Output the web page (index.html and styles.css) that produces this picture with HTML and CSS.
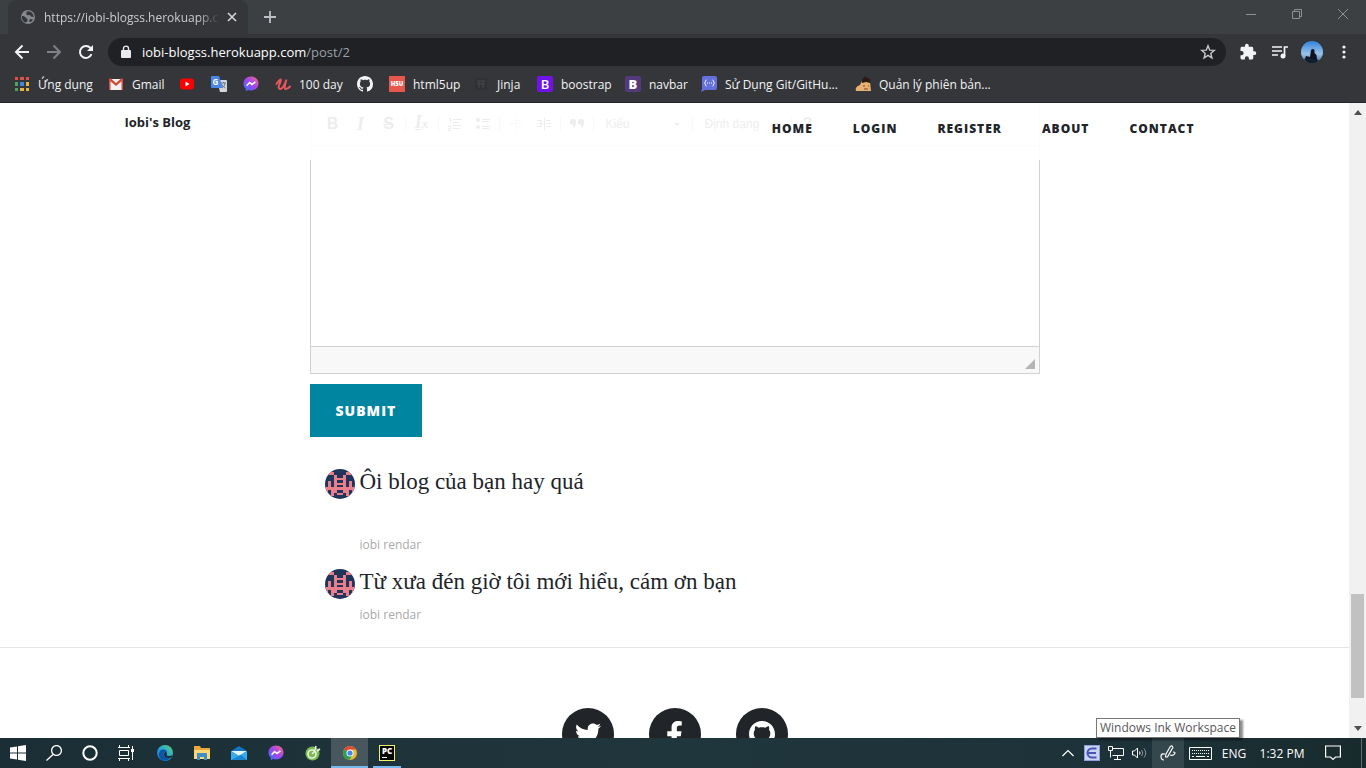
FILE: index.html
```html
<!DOCTYPE html>
<html lang="vi">
<head>
<meta charset="utf-8">
<meta name="viewport" content="width=device-width, initial-scale=1">
<title>Iobi's Blog</title>
<link rel="stylesheet" href="styles.css">
</head>
<body>
<svg class="sprite" aria-hidden="true">
  <defs>
    <linearGradient id="msg-fill" x1="0" y1="1" x2="1" y2="0">
      <stop offset="0" stop-color="#2a7bff"/><stop offset=".5" stop-color="#a044f4"/><stop offset="1" stop-color="#ff6a7a"/>
    </linearGradient>
    <linearGradient id="edge-fill" x1="0" y1="1" x2="1" y2="0">
      <stop offset="0" stop-color="#1268c4"/><stop offset=".5" stop-color="#2aa3dc"/><stop offset="1" stop-color="#5fd66a"/>
    </linearGradient>
    <linearGradient id="sky" x1="0" y1="0" x2="0" y2="1">
      <stop offset="0" stop-color="#2f83dd"/><stop offset=".6" stop-color="#9cc4ea"/><stop offset="1" stop-color="#35628c"/>
    </linearGradient>
    <clipPath id="round30"><circle cx="15" cy="15" r="15"/></clipPath>
    <clipPath id="round22"><circle cx="11" cy="11" r="11"/></clipPath>
  </defs>
  <symbol id="github" viewBox="0 0 16 16"><path fill="currentColor" d="M8 0C3.58 0 0 3.58 0 8c0 3.54 2.29 6.53 5.47 7.59.4.07.55-.17.55-.38 0-.19-.01-.82-.01-1.49-2.01.37-2.53-.49-2.69-.94-.09-.23-.48-.94-.82-1.13-.28-.15-.68-.52-.01-.53.63-.01 1.08.58 1.23.82.72 1.21 1.87.87 2.33.66.07-.52.28-.87.51-1.07-1.78-.2-3.64-.89-3.64-3.95 0-.87.31-1.59.82-2.15-.08-.2-.36-1.02.08-2.12 0 0 .67-.21 2.2.82.64-.18 1.32-.27 2-.27s1.36.09 2 .27c1.53-1.04 2.2-.82 2.2-.82.44 1.1.16 1.92.08 2.12.51.56.82 1.27.82 2.15 0 3.07-1.87 3.75-3.65 3.95.29.25.54.73.54 1.48 0 1.07-.01 1.93-.01 2.2 0 .21.15.46.55.38A8.01 8.01 0 0016 8c0-4.42-3.58-8-8-8z"/></symbol>
  <symbol id="messenger" viewBox="0 0 16 16"><path fill="url(#msg-fill)" d="M8 .5C3.700.5.5 3.600.5 7.600c0 2.100.9 3.900 2.300 5.200v2.500l2.300-1.200c.9.3 1.900.4 2.900.4 4.300 0 7.500-3.100 7.500-7C15.500 3.600 12.300.5 8 .5z"/><path d="M3.600 9.700 6.600 6.500l2.400 2 3.400-2.600" fill="none" stroke="#fff" stroke-width="1.600"/></symbol>
  <symbol id="robot" viewBox="0 0 30 30"><g clip-path="url(#round30)"><rect width="30" height="30" fill="#21355b"/><path fill="#e97f8b" d="M3 3h6v3H3zM21 3h6v3h-6zM9 6h3v3h6V6h3v12h3v-6h3v6h3v9h-3v-6h-3v6h-3v-3h-3v-3h-6v3H9v3H6v-6H3v6H0v-9h3v-6h3v6h3zM12 11v3h6v-3zM12 16v2h6v-2zM12 24h6v2h-6z"/></g></symbol>
</svg>

<header class="browser">
  <div class="tabs">
    <div class="tab">
      <svg width="16" height="16" viewBox="0 0 16 16"><circle cx="8" cy="8" r="7" fill="#85898d"/><path fill="#35363a" d="M2 7c2 0 3 .5 4 2 1 1 2 1 1.500 3L6 13.500C3 13 1.500 10 2 7zM7 2.500c2-.5 4 .2 5.500 2L14 8l-3-.5-1-1.500-2.500.3C6 6 6 4 7 2.500zM10 10l3 .5-2 2.500-2-.5z"/></svg>
      <span class="tab-title">https://iobi-blogss.herokuapp.com/post/2</span>
      <button class="plain" aria-label="Close tab"><svg width="10" height="10" viewBox="0 0 10 10"><path d="M1 1l8 8M9 1 1 9" stroke="#d5d7da" stroke-width="1.600"/></svg></button>
    </div>
    <button class="plain new-tab" aria-label="New tab"><svg width="12" height="12" viewBox="0 0 12 12"><path d="M6 0v12M0 6h12" stroke="#bdc1c6" stroke-width="1.800"/></svg></button>
    <div class="window-buttons">
      <button class="plain" aria-label="Minimize"><svg width="10" height="10"><path d="M0 5.500h10" stroke="#8d9194"/></svg></button>
      <button class="plain" aria-label="Restore"><svg width="10" height="10" fill="none" stroke="#8d9194"><path d="M.5 2.500h7v7h-7zM2.500 2.500v-2h7v7h-2"/></svg></button>
      <button class="plain" aria-label="Close"><svg width="10" height="10"><path d="M0 0l10 10M10 0 0 10" stroke="#8d9194"/></svg></button>
    </div>
  </div>

  <div class="toolbar">
    <button class="plain" aria-label="Back"><svg width="16" height="16" fill="none" stroke="#f1f3f4" stroke-width="2"><path d="M15 8H2M8.500 1.500 2 8l6.500 6.500"/></svg></button>
    <button class="plain" aria-label="Forward"><svg width="16" height="16" fill="none" stroke="#7e8185" stroke-width="2"><path d="M1 8h13M7.500 1.500 14 8l-6.500 6.500"/></svg></button>
    <button class="plain" aria-label="Reload"><svg width="16" height="16" viewBox="0 0 16 16"><path d="M13.500 10.200A6 6 0 1 1 12.500 4" fill="none" stroke="#f1f3f4" stroke-width="2"/><path d="M15 1v6H9z" fill="#f1f3f4"/></svg></button>
    <div class="address">
      <svg width="10" height="14" viewBox="0 0 10 14"><rect y="5" width="10" height="8" rx="1" fill="#e8eaed"/><path d="M2.500 5.500V3.600a2.500 2.500 0 0 1 5 0v1.900" fill="none" stroke="#e8eaed" stroke-width="1.400"/></svg>
      <span class="url">iobi-blogss.herokuapp.com<span class="url-path">/post/2</span></span>
      <button class="plain" aria-label="Bookmark this page"><svg width="16" height="16" viewBox="0 0 16 16"><path d="M8 1.800l1.700 4.300 4.600.3-3.500 3 1.100 4.500L8 11.400l-3.900 2.500 1.100-4.500-3.500-3 4.600-.3z" fill="none" stroke="#c4c7ca" stroke-width="1.400"/></svg></button>
    </div>
    <button class="plain" aria-label="Extensions"><svg width="18" height="18" viewBox="0 0 24 24" fill="#f1f3f4"><path d="M20.500 11H19V7c0-1.100-.9-2-2-2h-4V3.500a2.500 2.500 0 0 0-5 0V5H4c-1.100 0-2 .9-2 2v3.800h1.500a2.700 2.700 0 0 1 0 5.400H2V20c0 1.100.9 2 2 2h3.800v-1.500a2.700 2.700 0 0 1 5.400 0V22H17c1.100 0 2-.9 2-2v-4h1.500a2.500 2.500 0 0 0 0-5z"/></svg></button>
    <button class="plain" aria-label="Media"><svg width="16" height="14" viewBox="0 0 16 14"><path d="M0 2h10M0 6h10M0 10h6M12.500 11V2H16" fill="none" stroke="#f1f3f4" stroke-width="1.700"/><circle cx="11" cy="11" r="2.500" fill="#f1f3f4"/></svg></button>
    <button class="plain" aria-label="Profile"><svg width="22" height="22" viewBox="0 0 22 22"><g clip-path="url(#round22)"><rect width="22" height="22" fill="url(#sky)"/><path fill="#0d1420" d="M10 9q2-2 3.500 0v3l2 2 1 9H8l-1-4-3-1 1-3 4 1z"/><path fill="#11202e" d="M3 18l6-1 9 2-3 3H6z"/></g></svg></button>
    <button class="plain" aria-label="Menu"><svg width="4" height="14" fill="#f1f3f4"><circle cx="2" cy="2" r="1.600"/><circle cx="2" cy="7" r="1.600"/><circle cx="2" cy="12" r="1.600"/></svg></button>
  </div>

  <nav class="bookmarks" aria-label="Bookmarks">
    <a href="#"><svg width="16" height="16" viewBox="0 0 16 16"><path fill="#e05148" d="M1 1h3v3H1zM6 1h4v3H6zM12 1h3v3h-3z"/><path fill="#4aa565" d="M1 6h3v4H1zM1 12h3v3H1z"/><path fill="#4285e0" d="M6 6h4v4H6z"/><path fill="#e8b53c" d="M12 6h3v4h-3zM6 12h4v3H6zM12 12h3v3h-3z"/></svg><span>Ứng dụng</span></a>
    <a href="#"><svg width="16" height="16" viewBox="0 0 16 16"><path fill="#f2f2f2" d="M1 3h14v11H1z"/><path fill="#d9483b" d="M1 2.500h2L8 7l5-4.500h2V14h-1.500V5.200L8 10 2.500 5.200V14H1z"/></svg><span>Gmail</span></a>
    <a href="#" aria-label="YouTube"><svg width="16" height="16" viewBox="0 0 16 16"><rect x="1" y="2.500" width="14" height="11" rx="3" fill="#f00"/><path d="M6.500 5.500v5L10.500 8z" fill="#fff"/></svg></a>
    <a href="#" aria-label="Translate"><svg width="16" height="16" viewBox="0 0 16 16"><path fill="#d3d7dc" d="M6 4h9a1 1 0 0 1 1 1v10a1 1 0 0 1-1 1H9z"/><path fill="#4b87e8" d="M1 0h7l4 12H1a1 1 0 0 1-1-1V1a1 1 0 0 1 1-1z"/><path d="M10 7h5M12.500 6v1M14 7c0 3-1.500 4-3 5M11 8.500c1 2 2 3 3.500 3.500" stroke="#6a7683" fill="none"/><text x="1.500" y="9" class="logo-g">G</text></svg></a>
    <a href="#" aria-label="Messenger"><svg width="16" height="16"><use href="#messenger"/></svg></a>
    <a href="#"><svg width="16" height="16" viewBox="0 0 16 16"><path d="M1.500 8C3 6 4.500 3.500 5.500 3.500S5 7 4 9.500 4.500 14 6.500 12.500 10 8 11.500 3.500C10 8 9 12.500 10.500 13S13.500 12 15 10.500" fill="none" stroke="#e8575c" stroke-width="2" stroke-linecap="round"/></svg><span>100 day</span></a>
    <a href="#" aria-label="GitHub"><svg width="16" height="16"><use href="#github"/></svg></a>
    <a href="#"><svg width="16" height="16" viewBox="0 0 16 16"><rect width="16" height="16" fill="#e8574c"/><text x="8" y="10" class="logo-hsu">H5U</text></svg><span>html5up</span></a>
    <a href="#"><svg width="16" height="16" viewBox="0 0 16 16"><rect x="2" y="2" width="12" height="12" fill="#303134"/><path d="M4 5h8M4 8h8M6 5v7M10 5v7" stroke="#46484b" fill="none"/></svg><span>Jinja</span></a>
    <a href="#"><svg width="16" height="16" viewBox="0 0 16 16"><rect width="16" height="16" rx="2" fill="#7013e8"/><text x="8" y="13" class="logo-b">B</text></svg><span>boostrap</span></a>
    <a href="#"><svg width="16" height="16" viewBox="0 0 16 16"><rect width="16" height="16" rx="2" fill="#54397c"/><text x="8" y="13" class="logo-b heavy">B</text></svg><span>navbar</span></a>
    <a href="#"><svg width="16" height="16" viewBox="0 0 16 16"><path d="M3 0h11a2 2 0 0 1 2 2v10a2 2 0 0 1-2 2H4l-4 2 1-3V2a2 2 0 0 1 2-2z" fill="#6470dc"/><path d="M5.500 4C4 4 5 6 3.500 7 5 8 4 10 5.500 10M11.500 4c1.500 0 .5 2 2 3-1.500 1-.5 3-2 3" fill="none" stroke="#fff"/><path d="M6 7h1M8 7h1M10 7h1" stroke="#fff"/></svg><span>Sử Dụng Git/GitHu...</span></a>
    <a href="#"><svg width="16" height="16" viewBox="0 0 16 16"><path fill="#e6b273" d="M7 5l8 1 1 9H1c-1-3 1-5 4-6z"/><path fill="#2c1b12" d="M7 5c0-3 2-2 3-5l2 2c3 0 4 2 3 5l-4-1-4 1z"/><path stroke="#7d4b27" d="M8 10h2M13 10h1M9 13h4"/></svg><span>Quản lý phiên bản...</span></a>
  </nav>
</header>

<div class="viewport">
  <div class="page">
    <div class="site-bar">
      <div class="site-bar-inner">
        <a class="brand" href="#">Iobi's Blog</a>
        <nav class="menu"><a href="#">Home</a><a href="#">Login</a><a href="#">Register</a><a href="#">About</a><a href="#">Contact</a></nav>
      </div>
    </div>

    <main class="column">
      <form class="comment-form">
        <div class="editor">
          <div class="editor-tools">
            <button type="button" class="bold">B</button>
            <button type="button" class="italic">I</button>
            <button type="button" class="strike">S</button>
            <i class="sep"></i>
            <button type="button" class="italic clear" aria-label="Remove format"><u>I</u><sub>x</sub></button>
            <i class="sep"></i>
            <button type="button" aria-label="Numbered list"><svg width="14" height="14"><path d="M5 2.500h9M5 5.500h7M5 8.500h9M5 11.500h7M1 1.500h1.500V6M0 9.500h3v2H.5v2H3" fill="none" stroke="#484848"/></svg></button>
            <button type="button" aria-label="Bulleted list"><svg width="14" height="14"><circle cx="2" cy="3" r="2" fill="#484848"/><circle cx="2" cy="10" r="2" fill="#484848"/><path d="M6 2.500h8M6 4.500h7M6 9.500h8M6 11.500h7" stroke="#484848"/></svg></button>
            <i class="sep"></i>
            <button type="button" class="faded" aria-label="Decrease indent"><svg width="14" height="14"><path d="M7.500 1v12M9 3.500h4M9 6.500h4M9 9.500h4M0 7h6M3 5 1 7l2 2" fill="none" stroke="#484848"/></svg></button>
            <button type="button" aria-label="Increase indent"><svg width="14" height="14"><path d="M7.500 1v12M0 3.500h5M9 3.500h5M9 6.500h5M9 9.500h5M0 9.500h5M0 6.500h6M3 4l3 2.500L3 9" fill="none" stroke="#484848"/></svg></button>
            <i class="sep"></i>
            <button type="button" aria-label="Block quote"><svg width="16" height="12" fill="#484848"><path d="M1 4a3 3 0 1 1 6 0c0 3-1 5-4 6 1-1 1.500-2 1-3.200C2 7 1 5.500 1 4zM9 4a3 3 0 1 1 6 0c0 3-1 5-4 6 1-1 1.500-2 1-3.200C10 7 9 5.500 9 4z"/></svg></button>
            <i class="sep"></i>
            <span class="combo"><select aria-label="Kiểu"><option>Kiểu</option></select></span>
            <i class="sep"></i>
            <span class="combo"><select aria-label="Định dạng"><option>Định dạng</option></select></span>
            <i class="sep"></i>
            <button type="button" class="help">?</button>
          </div>
          <textarea class="editor-text" aria-label="Comment"></textarea>
          <div class="editor-foot"><svg width="10" height="10"><path d="M10 0v10H0z" fill="#b4b4b4"/></svg></div>
        </div>
        <button class="submit" type="submit">Submit</button>
      </form>

      <section class="comments">
        <article class="comment">
          <svg class="face" width="30" height="30" role="img" aria-label="iobi rendar"><use href="#robot"/></svg>
          <div><p class="long">Ôi blog của bạn hay quá</p><a class="author" href="#">iobi rendar</a></div>
        </article>
        <article class="comment">
          <svg class="face" width="30" height="30" role="img" aria-label="iobi rendar"><use href="#robot"/></svg>
          <div><p>Từ xưa đén giờ tôi mới hiểu, cám ơn bạn</p><a class="author" href="#">iobi rendar</a></div>
        </article>
      </section>
    </main>

    <footer class="site-foot">
      <a href="#" aria-label="Twitter"><svg width="26" height="26" viewBox="0 0 512 512"><path fill="#fff" d="M459.37 151.716c.325 4.548.325 9.097.325 13.645 0 138.720-105.583 298.558-298.558 298.558-59.452 0-114.680-17.219-161.137-47.106 8.447.974 16.568 1.299 25.340 1.299 49.055 0 94.213-16.568 130.274-44.832-46.132-.975-84.792-31.188-98.112-72.772 6.498.974 12.995 1.624 19.818 1.624 9.421 0 18.843-1.300 27.614-3.573-48.081-9.747-84.143-51.980-84.143-102.985v-1.299c13.969 7.797 30.214 12.670 47.431 13.319-28.264-18.843-46.781-51.005-46.781-87.391 0-19.492 5.197-37.360 14.294-52.954 51.655 63.675 129.300 105.258 216.365 109.807-1.624-7.797-2.599-15.918-2.599-24.040 0-57.828 46.782-104.934 104.934-104.934 30.213 0 57.502 12.670 76.670 33.137 23.715-4.548 46.456-13.320 66.599-25.340-7.798 24.366-24.366 44.833-46.132 57.827 21.117-2.273 41.584-8.122 60.426-16.243-14.292 20.791-32.161 39.308-52.628 54.253z"/></svg></a>
      <a href="#" aria-label="Facebook"><svg width="17" height="27" viewBox="0 0 320 512"><path fill="#fff" d="M279.14 288l14.220-92.660h-88.910v-60.130c0-25.350 12.420-50.060 52.240-50.060h40.420V6.260S260.430 0 225.360 0c-73.220 0-121.080 44.380-121.080 124.720v70.620H22.890V288h81.390v224h100.170V288z"/></svg></a>
      <a href="#" aria-label="GitHub"><svg width="26" height="26"><use href="#github"/></svg></a>
    </footer>
  </div>
  <div class="scrollbar" aria-hidden="true">
    <svg width="8" height="5"><path d="M0 5l4-5 4 5z" fill="#505050"/></svg>
    <div class="track"><div class="thumb"></div></div>
    <svg width="8" height="5"><path d="M0 0l4 5 4-5z" fill="#505050"/></svg>
  </div>
</div>

<footer class="taskbar">
  <div class="launch">
    <button class="plain" aria-label="Start"><svg width="16" height="16" fill="#fff"><path d="M0 2.500 7 1.500V7.500H0zM8 1.300 16 0v7.500H8zM0 8.500h7v6l-7-1zM8 8.500h8V16l-8-1.200z"/></svg></button>
    <button class="plain" aria-label="Search"><svg width="16" height="16" fill="none" stroke="#fff" stroke-width="1.300"><circle cx="10.500" cy="5.500" r="4.900"/><path d="M7 9.500 .5 15.500"/></svg></button>
    <button class="plain" aria-label="Cortana"><svg width="16" height="16" fill="none" stroke="#fff" stroke-width="2"><circle cx="8" cy="8" r="6.700"/></svg></button>
    <button class="plain" aria-label="Task view"><svg width="16" height="16" fill="none" stroke="#fff"><path d="M0 2.500h12M1.500 0v2.500M10.500 0v2.500M1.500 5.500h9v5h-9zM0 13.500h12M1.500 13.500V16M10.500 13.500V16M14.500 1v14"/><path d="M13 4h3v3h-3z" fill="#fff" stroke="none"/></svg></button>
  </div>
  <div class="apps">
    <button class="plain" aria-label="Edge"><svg width="16" height="16" viewBox="0 0 16 16"><circle cx="8" cy="8" r="8" fill="url(#edge-fill)"/><path fill="#0c55a5" d="M3 6c3-3 7-1 7 1-2-.5-3.500.5-3.500 2.500 0 3 4 4 7.500 2.500-2 3-5 4-8 3.500C2 14 1 9 3 6z"/><path fill="#1d2f36" d="M9 7c1.500.5 1 2 .5 3 1 1.500 4 1 6 0l-1 2.500c-3 1-6.500.5-7.500-2C6.500 8.500 7.500 7 9 7z"/></svg></button>
    <button class="plain" aria-label="File Explorer"><svg width="16" height="16"><path fill="#e9a93a" d="M0 1h6l1 2h9v11H0z"/><path fill="#fcd775" d="M0 5h16v9H0z"/><path fill="#3f8fc4" d="M3 8h10v7h-3v-3H6v3H3z"/></svg></button>
    <button class="plain" aria-label="Mail"><svg width="16" height="16"><path fill="#1673c0" d="M0 6l8-5 8 5v9H0z"/><path fill="#e8f4fb" d="M0 6h16l-8 5z"/><path fill="#35aeee" d="M0 6l8 5 8-5v9H0z"/><path fill="#1a86d3" d="M0 15 10 9.800 16 15z"/></svg></button>
    <button class="plain" aria-label="Messenger"><svg width="16" height="16"><use href="#messenger"/></svg></button>
    <button class="plain" aria-label="Cốc Cốc"><svg width="16" height="16"><circle cx="7.500" cy="8.500" r="7" fill="#7cb955"/><circle cx="7" cy="9" r="4" fill="none" stroke="#e8f5dd" stroke-width="1.600"/><path d="M7 9l3-3M10 5l1-4M12 6l3-2" stroke="#e8f5dd" stroke-width="1.600"/></svg></button>
    <button class="plain active" aria-label="Chrome"><svg width="16" height="16"><circle cx="8" cy="8" r="7" fill="#e8b931"/><path fill="#db4a3b" d="M8 8 2 4.400A7 7 0 0 1 14 4.500H8z"/><path fill="#2f9f56" d="M8 8 2 4.400A7 7 0 0 0 7.500 15l2.800-5z"/><circle cx="8" cy="8" r="3.500" fill="#fff"/><circle cx="8" cy="8" r="2.600" fill="#4385ee"/></svg></button>
    <button class="plain running" aria-label="PyCharm"><svg width="16" height="16"><rect x=".5" y=".5" width="15" height="15" fill="#050505" stroke="#eef06c"/><text x="8" y="9" class="logo-pc">PC</text><path d="M3 12.500h5" stroke="#fff"/></svg></button>
  </div>
  <div class="tray">
    <button class="plain" aria-label="Show hidden icons"><svg width="12" height="8" fill="none" stroke="#fff" stroke-width="1.200"><path d="M.5 7 6 1.500 11.500 7"/></svg></button>
    <button class="plain" aria-label="EVKey"><svg width="16" height="16"><rect width="16" height="16" fill="#8d9fdc"/><rect x="1" y="1" width="14" height="14" fill="#cbd3f3"/><path d="M12.500 3.500H8a4.500 4.500 0 0 0 0 9h4.500M4 8h8" fill="none" stroke="#4a55b8" stroke-width="2"/></svg></button>
    <button class="plain" aria-label="Network"><svg width="16" height="14" fill="none" stroke="#fff"><path d="M5 2.500h10.500v7H4.500M.5 .5h4v4h-4zM2.500 4.500v7M9.500 9.500v4M6 13.500h7"/></svg></button>
    <button class="plain" aria-label="Volume"><svg width="16" height="14" fill="none" stroke="#fff"><path d="M.5 5v4h2l3 3V2l-3 3zM7.500 5.500q1 1.500 0 3"/><path d="M9.500 4q2.500 3 0 6M12 2.500q3.500 4.500 0 9" stroke="#87959a"/></svg></button>
    <button class="plain ink" aria-describedby="ink-tip" aria-label="Ink"><svg width="16" height="16" fill="none" stroke="#fff" stroke-width="1.200"><path d="M6 9 10 2q1.500-2 2.500-.5T12 4L7.500 12H5.500zM5 9q-4-1-4 2.500T4 15M13 7q3 0 1.500 2T10 10"/></svg><span class="tip" id="ink-tip" role="tooltip">Windows Ink Workspace</span></button>
    <button class="plain keys" aria-label="Touch keyboard"><svg width="23" height="13" fill="none" stroke="#fff"><path d="M.5 .5h22v12H.5z"/><path d="M3 3.500h17M3 6.500h17" stroke-dasharray="1 1"/><path d="M3 9.500h2M7 9.500h9M18 9.500h2"/></svg></button>
    <button class="plain lang">ENG</button>
    <button class="plain clock">1:32 PM</button>
    <button class="plain notes" aria-label="Notifications"><svg width="16" height="16" fill="none" stroke="#fff" stroke-width="1.200"><path d="M.6 1h14.800v11H10.500L8 14.500 5.500 12H.6z"/></svg></button>
    <button class="plain desktop" aria-label="Show desktop"></button>
  </div>
</footer>
</body>
</html>
```
FILE: styles.css
```css
* { box-sizing: border-box; }

body {
  margin: 0;
  height: 100vh;
  display: flex;
  flex-direction: column;
  overflow: hidden;
  background: #fff;
  color: #212529;
  font-family: "Open Sans", "Noto Sans", sans-serif;
  font-size: 12px;
}

a { color: inherit; text-decoration: none; }
svg { display: block; flex: none; }
.sprite { position: absolute; width: 0; height: 0; }

.plain {
  display: flex;
  align-items: center;
  justify-content: center;
  padding: 0;
  border: 0;
  background: none;
  color: inherit;
  font: inherit;
}

/* Browser frame */
.browser { flex: none; background: #35363a; border-bottom: 1px solid #242528; }

.tabs {
  display: flex;
  align-items: flex-end;
  height: 34px;
  padding-left: 8px;
  background: #3c4043;
}
.tab {
  display: flex;
  align-items: center;
  gap: 8px;
  width: 240px;
  height: 34px;
  padding: 0 11px 0 12px;
  border-radius: 8px 8px 0 0;
  background: #35363a;
  color: #c9cbce;
}
.tab-title {
  flex: 1;
  overflow: hidden;
  white-space: nowrap;
  mask-image: linear-gradient(to right, #000 88%, transparent);
}
.new-tab { width: 44px; height: 34px; }
.window-buttons { display: flex; align-self: flex-start; margin-left: auto; }
.window-buttons .plain { width: 46px; height: 28px; }

.toolbar { display: flex; align-items: center; height: 36px; padding: 0 6px; }
.toolbar > .plain { width: 32px; height: 32px; }
.address {
  flex: 1;
  display: flex;
  align-items: center;
  gap: 11px;
  height: 28px;
  margin: 0 6px;
  padding: 0 10px 0 13px;
  border-radius: 14px;
  background: #202124;
  color: #fff;
  font-size: 13px;
}
.url { flex: 1; white-space: nowrap; }
.url-path { color: #9aa0a6; }

.bookmarks {
  display: grid;
  grid-template-columns: 94px 71px 32px 32px 32px 82px 32px 84px 64px 88px 76px 154px auto;
  align-items: center;
  height: 32px;
  padding: 0 14px 4px;
  color: #f1f3f4;
}
.bookmarks a { display: flex; align-items: center; gap: 8px; white-space: nowrap; }
.logo-g { fill: #fff; font-size: 8px; font-weight: 700; }
.logo-hsu { fill: #fff; font-size: 6px; font-weight: 800; text-anchor: middle; }
.logo-b { fill: #fff; font-size: 13px; font-weight: 600; text-anchor: middle; }
.heavy { font-weight: 800; }

/* Page area */
.viewport { flex: 1; min-height: 0; display: flex; }
.page { position: relative; flex: 1; overflow: hidden; }

.site-bar {
  position: absolute;
  top: 0;
  left: 0;
  right: 0;
  z-index: 1;
  height: 57px;
  background: rgba(255, 255, 255, .9);
}
.site-bar-inner {
  display: flex;
  align-items: flex-start;
  justify-content: space-between;
  max-width: 1140px;
  margin: 0 auto;
  padding: 8px 30px 0 20px;
  font-weight: 800;
}
.brand { font-size: 13px; font-weight: 700; line-height: 22px; }
.menu { display: flex; line-height: 36px; }
.menu a { padding: 0 20px; letter-spacing: 1px; text-transform: uppercase; }

.column { width: 730px; max-width: 100%; margin: 0 auto; }

.editor { border: 1px solid #d1d1d1; border-top: 0; }
.editor-tools {
  display: flex;
  align-items: center;
  height: 43px;
  padding: 0 8px;
  border-bottom: 1px solid #d1d1d1;
  background: #f8f8f8;
  color: #484848;
}
.editor-tools button {
  display: flex;
  align-items: center;
  justify-content: center;
  width: 28px;
  height: 28px;
  padding: 0;
  border: 0;
  background: none;
  color: inherit;
  font: 700 16px "Liberation Sans", sans-serif;
}
.editor-tools .italic { font-family: "Liberation Serif", serif; font-style: italic; font-size: 18px; }
.editor-tools .strike { text-decoration: line-through; }
.editor-tools .clear { align-items: baseline; }
.editor-tools sub { font-size: 13px; vertical-align: baseline; line-height: 28px; }
.editor-tools .faded { opacity: .3; }
.sep { width: 1px; height: 18px; margin: 0 2px; background: #bcbcbc; }
.combo { display: flex; align-items: center; width: 94px; padding: 0 10px; }
.combo::after {
  content: "";
  border: 3px solid transparent;
  border-top-color: #484848;
  border-bottom: 0;
}
.combo select {
  flex: 1;
  min-width: 0;
  padding: 0;
  border: 0;
  background: none;
  color: #484848;
  appearance: none;
  font: 12px "Liberation Sans", sans-serif;
}
.editor-text { display: block; width: 100%; height: 200px; border: 0; resize: none; }
.editor-foot {
  display: flex;
  align-items: flex-end;
  justify-content: flex-end;
  height: 27px;
  padding: 4px;
  border-top: 1px solid #d1d1d1;
  background: #f8f8f8;
}

.submit {
  display: block;
  height: 53px;
  margin-top: 10px;
  padding: 0 26px;
  border: 0;
  background: #0085a1;
  color: #fff;
  font: 800 14px "Open Sans", sans-serif;
  letter-spacing: 1px;
  text-transform: uppercase;
}

.comments { margin-top: 32px; padding-left: 15px; }
.comment { display: flex; align-items: flex-start; gap: 5px; padding-bottom: 8px; }
.comment p {
  margin: 0;
  font-family: "Liberation Serif", serif;
  font-size: 23px;
  line-height: 26px;
  padding-bottom: 4px;
}
.comment .long { padding-bottom: 34px; }
.author { display: block; color: #a9a9a9; line-height: 32px; }

.site-foot {
  display: flex;
  justify-content: center;
  gap: 35px;
  margin-top: 8px;
  padding: 60px 0;
  border-top: 1px solid #e3e3e3;
}
.site-foot a {
  display: flex;
  align-items: center;
  justify-content: center;
  width: 52px;
  height: 52px;
  border-radius: 50%;
  background: #212529;
  color: #fff;
}

.scrollbar {
  display: flex;
  flex-direction: column;
  align-items: center;
  width: 17px;
  padding: 7px 0;
  background: #f1f1f1;
}
.track { flex: 1; display: flex; align-items: flex-end; padding: 5px 0 28px; }
.thumb { width: 13px; height: 104px; background: #c1c1c1; }

/* Taskbar */
.taskbar {
  flex: none;
  display: flex;
  justify-content: flex-start;
  height: 30px;
  background: linear-gradient(to right, #1b2e35, #20363d 50%, #1c3238 85%, #182a2c);
  color: #fff;
}
.launch, .apps, .tray { display: flex; }
.launch .plain { width: 36px; }
.apps { margin-left: 2px; }
.apps .plain { width: 37px; }
.apps .active { background: #47575d; box-shadow: inset 0 -2px #76b9ed; }
.apps .running { background: linear-gradient(#76b9ed, #76b9ed) center bottom / 28px 2px no-repeat; }

.tray { margin-left: auto; }
.tray .plain { width: 24px; }
.tray .ink { position: relative; width: 32px; background: #34474d; }
.tray .keys { width: 32px; }
.tray .lang { width: 36px; }
.tray .clock { width: 60px; }
.tray .notes { width: 42px; margin-right: 7px; }
.tray .desktop { width: 5px; border-left: 1px solid #5d6b6e; }
.tip {
  position: absolute;
  bottom: 100%;
  left: 50%;
  transform: translateX(-50%);
  z-index: 2;
  padding: 0 3px;
  border: 1px solid #767676;
  background: #fff;
  box-shadow: 3px 2px 2px rgba(0, 0, 0, .45);
  color: #575757;
  line-height: 18px;
  white-space: nowrap;
}
.logo-pc { fill: #fff; font-size: 8px; font-weight: 800; text-anchor: middle; }
```
